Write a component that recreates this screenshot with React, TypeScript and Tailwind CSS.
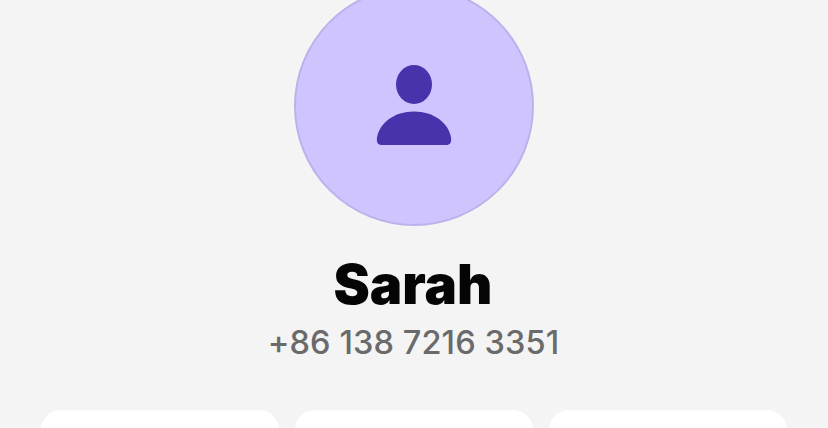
const App = () => {
  return (
    <div className="h-[428px] w-[828px] overflow-hidden bg-[#f4f4f4] flex flex-col items-center" style={{ fontFamily: "Inter, sans-serif" }}>
      <div className="-mt-[14px] w-[240px] h-[240px] shrink-0 rounded-full bg-[#d0c4ff] border-2 border-[#bdb1ec] flex items-center justify-center">
        <svg width="76" height="82" viewBox="0 0 76 82" fill="#4833ad">
          <ellipse cx="38" cy="19.5" rx="18" ry="19.5" />
          <path d="M1 72.5C3.5 58 18 46.5 38 46.5S72.5 58 75 72.5C75.8 77.5 74 80 70 80H6C2 80 0.2 77.5 1 72.5Z" />
        </svg>
      </div>
      <h1 className="mt-[26px] pr-[2px] text-[54.5px] leading-[64px] font-black text-[#050505]">Sarah</h1>
      <p className="mt-[7px] pr-[1px] text-[32.5px] leading-[40px] font-medium tracking-[0.1px] text-[#6a6a6a]">+86 138 7216 3351</p>
      <div className="mt-[47px] flex gap-[16px]">
        <div className="w-[238px] h-[60px] rounded-[20px] bg-white" />
        <div className="w-[238px] h-[60px] rounded-[20px] bg-white" />
        <div className="w-[238px] h-[60px] rounded-[20px] bg-white" />
      </div>
    </div>
  );
};

export default App;
